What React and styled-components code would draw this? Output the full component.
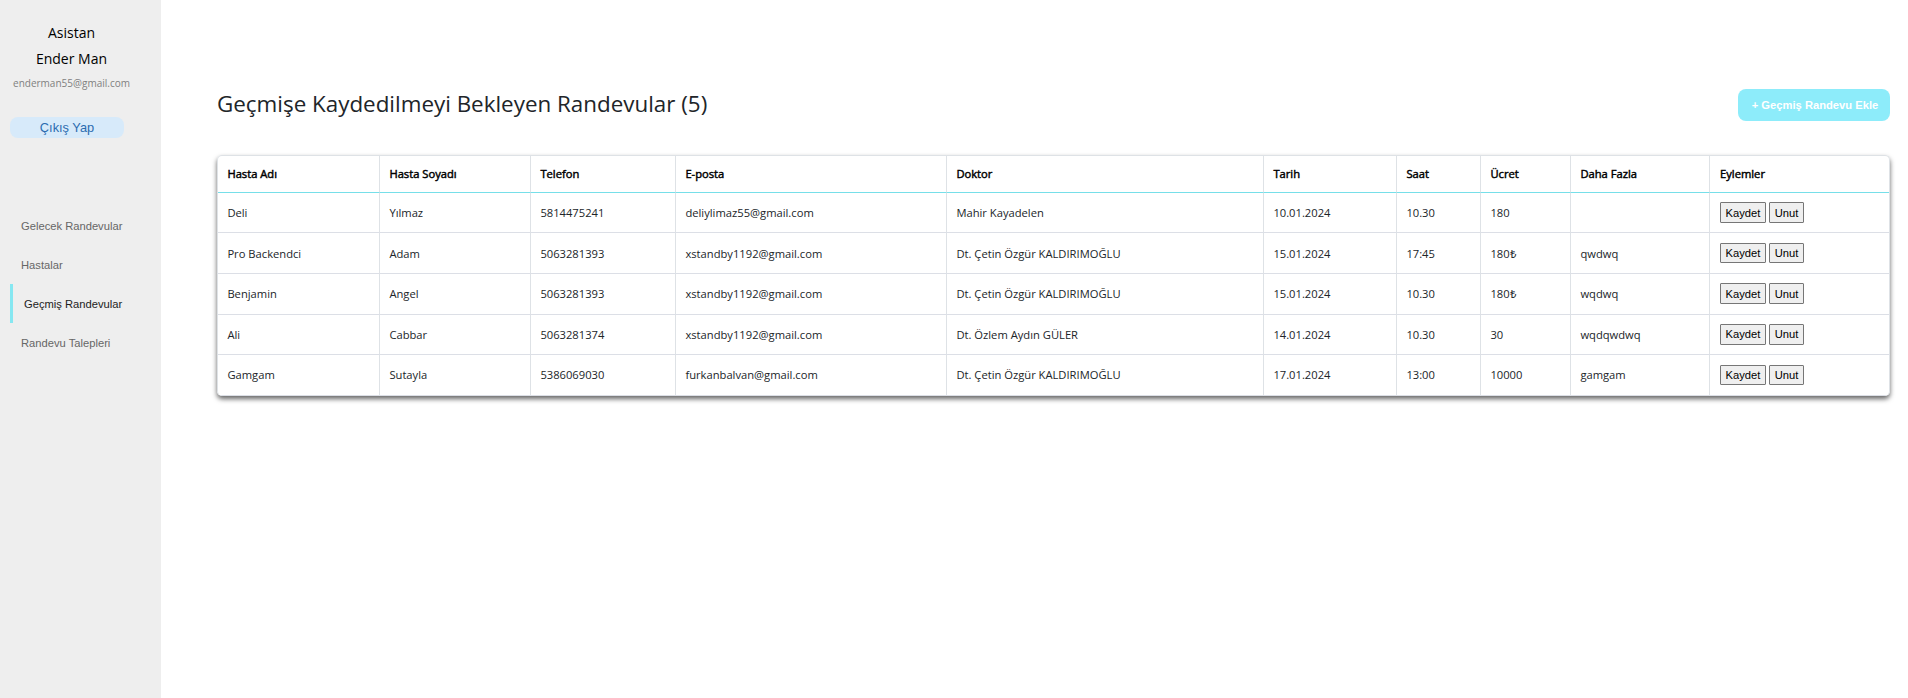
import React from "react";
import styled, { createGlobalStyle } from "styled-components";

const Global = createGlobalStyle`
  * { box-sizing: border-box; }
  body {
    margin: 0;
    background: #fff;
    color: #212529;
    font-family: "Open Sans", sans-serif;
  }
`;

const Page = styled.div`
  display: flex;
  min-height: 698px;
`;

const Sidebar = styled.aside`
  width: 161px;
  flex: none;
  padding: 20px 0 0 10px;
  background: #eee;
`;

const Profile = styled.div`
  width: 123px;
  text-align: center;
  color: #000;
`;

const ProfileLine = styled.div`
  height: 26px;
  font-size: 14px;
  line-height: 26px;
`;

const Email = styled.div`
  height: 22px;
  color: #808080;
  font-size: 10px;
  line-height: 22px;
`;

const LogoutButton = styled.button`
  display: block;
  width: 114px;
  height: 21px;
  margin-top: 23px;
  padding: 0;
  border: 0;
  border-radius: 8px;
  background: #d7eafa;
  color: #2b6cb0;
  font: 12.8px/21px "Liberation Sans", Arial, sans-serif;
`;

const Nav = styled.nav`
  margin-top: 68px;
`;

const NavItem = styled.a`
  display: block;
  height: 39px;
  padding-left: 11px;
  border-left: ${(p) => (p.$active ? "3px solid #86e7f1" : "0")};
  color: ${(p) => (p.$active ? "#222" : "#666")};
  font: 11.2px/40px "Liberation Sans", Arial, sans-serif;
  white-space: nowrap;
`;

const Main = styled.main`
  flex: 1;
  min-width: 0;
  padding: 89px 18px 0 56px;
`;

const Header = styled.header`
  display: flex;
  align-items: flex-start;
  justify-content: space-between;
`;

const Title = styled.h1`
  margin: 0;
  font-size: 22.4px;
  font-weight: 400;
  line-height: 30px;
`;

const AddButton = styled.button`
  width: 152px;
  height: 32px;
  padding: 0 0 0 2px;
  border: 0;
  border-radius: 8px;
  background: #8decfa;
  color: #fff;
  font: bold 11.2px "Liberation Sans", Arial, sans-serif;
`;

const Table = styled.div`
  margin-top: 34px;
  border: 1px solid #dee2e6;
  border-bottom: 0;
  border-radius: 5px;
  box-shadow: 0 3px 5px rgba(0, 0, 0, 0.6);
  overflow: hidden;
`;

const Row = styled.div`
  display: grid;
  grid-template-columns: 162px 151px 145px 271px 317px 133px 84px 90px 139px 1fr;
  height: ${(p) => (p.$head ? "36.8px" : "40.6px")};
`;

const Cell = styled.div`
  display: flex;
  align-items: center;
  gap: 3px;
  padding: 0 9.4px ${(p) => (p.$head ? "1.2px" : "0")};
  border-right: 1px solid #dee2e6;
  border-bottom: 1px solid ${(p) => (p.$head ? "#76dfe9" : "#dcdfe6")};
  color: ${(p) => (p.$head ? "#000" : "#212529")};
  font-size: 11.2px;
  -webkit-text-stroke: ${(p) => (p.$head ? "0.45px #000" : "0")};
  white-space: nowrap;
  &:last-child { border-right: 0; padding-left: 10px; }
`;

const ActionButton = styled.button`
  width: ${(p) => p.$width}px;
  height: 20.6px;
  padding: 0;
  border: 1px solid #767676;
  border-radius: 1px;
  background: #efefef;
  color: #000;
  font: 11.2px "Liberation Sans", Arial, sans-serif;
`;

const navItems = ["Gelecek Randevular", "Hastalar", "Geçmiş Randevular", "Randevu Talepleri"];

const columns = [
  "Hasta Adı", "Hasta Soyadı", "Telefon", "E-posta", "Doktor",
  "Tarih", "Saat", "Ücret", "Daha Fazla", "Eylemler",
];

const appointments = [
  ["Deli", "Yılmaz", "5814475241", "deliylimaz55@gmail.com", "Mahir Kayadelen", "10.01.2024", "10.30", "180", ""],
  ["Pro Backendci", "Adam", "5063281393", "xstandby1192@gmail.com", "Dt. Çetin Özgür KALDIRIMOĞLU", "15.01.2024", "17:45", "180₺", "qwdwq"],
  ["Benjamin", "Angel", "5063281393", "xstandby1192@gmail.com", "Dt. Çetin Özgür KALDIRIMOĞLU", "15.01.2024", "10.30", "180₺", "wqdwq"],
  ["Ali", "Cabbar", "5063281374", "xstandby1192@gmail.com", "Dt. Özlem Aydın GÜLER", "14.01.2024", "10.30", "30", "wqdqwdwq"],
  ["Gamgam", "Sutayla", "5386069030", "furkanbalvan@gmail.com", "Dt. Çetin Özgür KALDIRIMOĞLU", "17.01.2024", "13:00", "10000", "gamgam"],
];

export default function App() {
  return (
    <>
      <Global />
      <Page>
        <Sidebar>
          <Profile>
            <ProfileLine>Asistan</ProfileLine>
            <ProfileLine>Ender Man</ProfileLine>
            <Email>enderman55@gmail.com</Email>
          </Profile>
          <LogoutButton>Çıkış Yap</LogoutButton>
          <Nav>
            {navItems.map((item) => (
              <NavItem key={item} $active={item === "Geçmiş Randevular"}>{item}</NavItem>
            ))}
          </Nav>
        </Sidebar>
        <Main>
          <Header>
            <Title>Geçmişe Kaydedilmeyi Bekleyen Randevular ({appointments.length})</Title>
            <AddButton>+ Geçmiş Randevu Ekle</AddButton>
          </Header>
          <Table>
            <Row $head>
              {columns.map((c) => <Cell key={c} $head>{c}</Cell>)}
            </Row>
            {appointments.map((row, i) => (
              <Row key={i}>
                {row.map((value, j) => <Cell key={j}>{value}</Cell>)}
                <Cell>
                  <ActionButton $width={46}>Kaydet</ActionButton>
                  <ActionButton $width={35}>Unut</ActionButton>
                </Cell>
              </Row>
            ))}
          </Table>
        </Main>
      </Page>
    </>
  );
}
